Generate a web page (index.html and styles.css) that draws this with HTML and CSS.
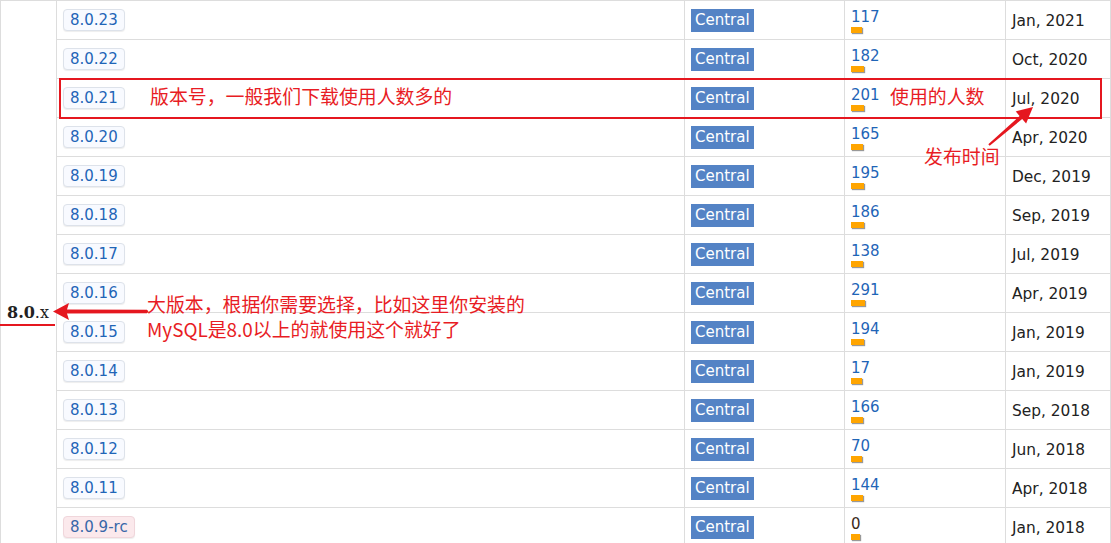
FILE: index.html
```html
<!DOCTYPE html>
<html lang="zh-CN">
<head>
<meta charset="UTF-8">
<title>mysql-connector-java 8.0.x</title>
<link rel="stylesheet" href="styles.css">
</head>
<body>
<div class="versions">
  <div class="group"><span class="major"><b>8.0</b>.x</span></div>
  <div class="rows">
    <div class="row">
      <div class="cell ver"><a class="vbtn">8.0.23</a></div>
      <div class="cell repo"><span class="central">Central</span></div>
      <div class="cell usage"><a>117</a><i class="bar" style="width:11px"></i></div>
      <div class="cell date">Jan, 2021</div>
    </div>
    <div class="row">
      <div class="cell ver"><a class="vbtn">8.0.22</a></div>
      <div class="cell repo"><span class="central">Central</span></div>
      <div class="cell usage"><a>182</a><i class="bar" style="width:13px"></i></div>
      <div class="cell date">Oct, 2020</div>
    </div>
    <div class="row">
      <div class="cell ver"><a class="vbtn">8.0.21</a></div>
      <div class="cell repo"><span class="central">Central</span></div>
      <div class="cell usage"><a>201</a><i class="bar" style="width:13px"></i></div>
      <div class="cell date">Jul, 2020</div>
    </div>
    <div class="row">
      <div class="cell ver"><a class="vbtn">8.0.20</a></div>
      <div class="cell repo"><span class="central">Central</span></div>
      <div class="cell usage"><a>165</a><i class="bar" style="width:12px"></i></div>
      <div class="cell date">Apr, 2020</div>
    </div>
    <div class="row">
      <div class="cell ver"><a class="vbtn">8.0.19</a></div>
      <div class="cell repo"><span class="central">Central</span></div>
      <div class="cell usage"><a>195</a><i class="bar" style="width:13px"></i></div>
      <div class="cell date">Dec, 2019</div>
    </div>
    <div class="row">
      <div class="cell ver"><a class="vbtn">8.0.18</a></div>
      <div class="cell repo"><span class="central">Central</span></div>
      <div class="cell usage"><a>186</a><i class="bar" style="width:13px"></i></div>
      <div class="cell date">Sep, 2019</div>
    </div>
    <div class="row">
      <div class="cell ver"><a class="vbtn">8.0.17</a></div>
      <div class="cell repo"><span class="central">Central</span></div>
      <div class="cell usage"><a>138</a><i class="bar" style="width:12px"></i></div>
      <div class="cell date">Jul, 2019</div>
    </div>
    <div class="row">
      <div class="cell ver"><a class="vbtn">8.0.16</a></div>
      <div class="cell repo"><span class="central">Central</span></div>
      <div class="cell usage"><a>291</a><i class="bar" style="width:14px"></i></div>
      <div class="cell date">Apr, 2019</div>
    </div>
    <div class="row">
      <div class="cell ver"><a class="vbtn">8.0.15</a></div>
      <div class="cell repo"><span class="central">Central</span></div>
      <div class="cell usage"><a>194</a><i class="bar" style="width:13px"></i></div>
      <div class="cell date">Jan, 2019</div>
    </div>
    <div class="row">
      <div class="cell ver"><a class="vbtn">8.0.14</a></div>
      <div class="cell repo"><span class="central">Central</span></div>
      <div class="cell usage"><a>17</a><i class="bar" style="width:11px"></i></div>
      <div class="cell date">Jan, 2019</div>
    </div>
    <div class="row">
      <div class="cell ver"><a class="vbtn">8.0.13</a></div>
      <div class="cell repo"><span class="central">Central</span></div>
      <div class="cell usage"><a>166</a><i class="bar" style="width:12px"></i></div>
      <div class="cell date">Sep, 2018</div>
    </div>
    <div class="row">
      <div class="cell ver"><a class="vbtn">8.0.12</a></div>
      <div class="cell repo"><span class="central">Central</span></div>
      <div class="cell usage"><a>70</a><i class="bar" style="width:11px"></i></div>
      <div class="cell date">Jun, 2018</div>
    </div>
    <div class="row">
      <div class="cell ver"><a class="vbtn">8.0.11</a></div>
      <div class="cell repo"><span class="central">Central</span></div>
      <div class="cell usage"><a>144</a><i class="bar" style="width:12px"></i></div>
      <div class="cell date">Apr, 2018</div>
    </div>
    <div class="row">
      <div class="cell ver"><a class="vbtn rc">8.0.9-rc</a></div>
      <div class="cell repo"><span class="central">Central</span></div>
      <div class="cell usage"><a class="zero">0</a><i class="bar" style="width:9px"></i></div>
      <div class="cell date">Jan, 2018</div>
    </div>
  </div>
</div>

<!-- screenshot annotations -->
<div class="notes">
  <svg class="marks" width="1111" height="543" viewBox="0 0 1111 543">
    <rect x="60" y="79" width="1041" height="39" fill="none" stroke="#e5171f" stroke-width="2"/>
    <rect x="0" y="324" width="55" height="2" fill="#e5171f"/>
    <polygon fill="#e5171f" points="53,311.5 69,303 67,309.5 147,309.8 148.5,311.5 147,313.2 67,313.5 69,320"/>
    <polygon fill="#e5171f" points="1033,107 1026.1,123.6 1022.2,119 989.7,145.8 988.3,144.2 1019.6,116 1015.7,111.4"/>
  </svg>
  <div class="note n1">版本号，一般我们下载使用人数多的</div>
  <div class="note n2">使用的人数</div>
  <div class="note n3">发布时间</div>
  <div class="note n4">大版本，根据你需要选择，比如这里你安装的<br>MySQL是8.0以上的就使用这个就好了</div>
</div>
</body>
</html>
```

FILE: styles.css
```css
html, body { margin:0; padding:0; overflow:hidden; background:#fff; }
body { font-family:"DejaVu Sans", Verdana, sans-serif; font-size:15px; color:#222; position:relative; width:1111px; height:543px; }

.versions { display:flex; border-top:1px solid #ddd; }
.group { width:57px; box-sizing:border-box; border-left:1px solid #ddd; border-right:1px solid #ddd; padding:302px 0 0 6px; flex:none; }
.major { font-family:"DejaVu Serif", "Liberation Serif", serif; font-size:16px; color:#222; line-height:19px; }
.major b { font-weight:bold; }

.rows { flex:none; width:1054px; }
.row { display:grid; grid-template-columns:628px 160px 161px 105px; height:39px; box-sizing:border-box; border-bottom:1px solid #ddd; }
.cell { border-right:1px solid #ddd; padding:0 6px; display:flex; align-items:center; min-width:0; }

.vbtn { display:inline-block; height:22px; box-sizing:border-box; line-height:20px; padding:0 6px; margin-top:-1px; border:1px solid #dde2ea; border-radius:4px; background:#f8faff; color:#1f65b7; box-shadow:0 1px 1px rgba(0,0,0,.07); }
.vbtn.rc { background:#fbe9ec; border-color:#f0d6db; color:#3867a8; }

.central { display:inline-block; height:23px; line-height:23px; padding:0 4px; margin-top:1px; background:#5483c5; color:#fff; }

.usage { flex-direction:column; align-items:flex-start; justify-content:flex-start; padding-top:8px; }
.usage a { color:#1f65b7; line-height:17px; }
.usage a.zero { color:#3a2a1a; }
.bar { display:block; height:6px; margin-top:1px; background:#ffa500; box-shadow:1px 1px 1px #999; }

.date { color:#222; font-size:15.4px; padding-top:1px; }

.notes { position:absolute; left:0; top:0; width:1111px; height:543px; pointer-events:none; }
.marks { position:absolute; left:0; top:0; }
.note { position:absolute; font-family:"Noto Sans CJK SC", "Noto Sans", sans-serif; font-size:18.9px; line-height:25px; color:#e81c24; white-space:nowrap; }
.n1 { left:150px; top:83px; }
.n2 { left:890px; top:83px; }
.n3 { left:924px; top:143px; }
.n4 { left:147px; top:291px; }
```
